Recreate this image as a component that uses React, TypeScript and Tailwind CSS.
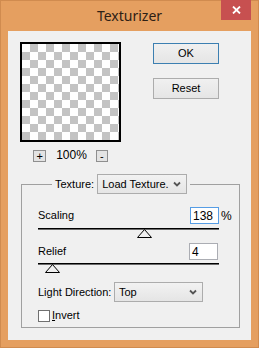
import React from 'react'

function Chevron() {
  return (
    <svg width="8" height="6" viewBox="0 0 8 6" className="shrink-0">
      <path d="M1 1.5 L4 4.5 L7 1.5" fill="none" stroke="#555" strokeWidth="1.8" />
    </svg>
  )
}

function Dropdown({ label, width }: { label: string; width: string }) {
  return (
    <div
      className={`${width} h-[20px] flex items-center justify-between pl-[4px] pr-[5px] border border-[#acacac] bg-gradient-to-b from-[#f2f2f2] to-[#e5e5e5]`}
    >
      <span>{label}</span>
      <Chevron />
    </div>
  )
}

function Slider({ pos }: { pos: number }) {
  // pos = thumb centre, px from the start of the track
  return (
    <div className="relative w-[181px] h-[10px]">
      <div className="h-[1px] bg-black" />
      <div className="h-[1px] bg-[#6a6a6a]" />
      <svg className="absolute top-[1px]" style={{ left: pos - 7.5 }} width="15" height="9" viewBox="0 0 15 9">
        <path d="M0.5 8.5 L7.5 0.5 L14.5 8.5 Z" fill="#f0f0f0" stroke="#000" strokeWidth="1" />
      </svg>
    </div>
  )
}

function NumberBox({ value, focused }: { value: string; focused?: boolean }) {
  return (
    <div
      className={`w-[29px] h-[17px] flex items-center pl-[2px] bg-white border text-[12px] ${
        focused ? 'border-[#569de5]' : 'border-[#abadb3]'
      }`}
    >
      {value}
    </div>
  )
}

function PushButton({ label, isDefault }: { label: string; isDefault?: boolean }) {
  return (
    <button
      className={`w-[66px] h-[21px] flex items-center justify-center border bg-gradient-to-b from-[#f0f0f0] to-[#e5e5e5] ${
        isDefault ? 'border-[#3c7fb1]' : 'border-[#acacac]'
      }`}
    >
      {label}
    </button>
  )
}

export default function App() {
  return (
    <div className="w-[259px] h-[348px] bg-[#e59f60] border border-[#d08b4f] flex flex-col font-['Liberation_Sans',Arial,sans-serif] text-[11px] text-black">
      {/* title bar */}
      <div className="relative h-[30px] flex items-center justify-center">
        <span className="font-['Noto_Sans',sans-serif] text-[14px] text-[#2d2015] -mt-[1px]">Texturizer</span>
        <div className="absolute top-[-1px] right-[7px] w-[30px] h-[20px] bg-[#c75050] flex items-center justify-center">
          <svg width="9" height="8" viewBox="0 0 9 8">
            <path d="M1 0.5 L8 7.5 M8 0.5 L1 7.5" stroke="#fff" strokeWidth="1.8" />
          </svg>
        </div>
      </div>

      {/* client area */}
      <div className="ml-[7px] w-[243px] h-[309px] bg-[#f0f0f0] pl-[12px] pt-[11px]">
        <div className="flex">
          <div className="flex flex-col items-center w-[101px]">
            <div className="w-[101px] h-[100px] border-2 border-black bg-[conic-gradient(#c3c3c3_25%,#ffffff_0_50%,#c3c3c3_0_75%,#ffffff_0)] bg-[length:16px_16px]" />
            <div className="mt-[8px] h-[12px] flex items-center">
              <div className="w-[13px] h-[12px] border border-[#8f8f8f] bg-[#e3e3e3] flex items-center justify-center text-[11px] leading-none">
                +
              </div>
              <span className="ml-[10px] mr-[9px] -mt-[2px] text-[12px] leading-none">100%</span>
              <div className="w-[12px] h-[12px] border border-[#8f8f8f] bg-[#e3e3e3] flex items-center justify-center text-[11px] leading-none">
                -
              </div>
            </div>
          </div>
          <div className="ml-[32px] mt-[1px] flex flex-col gap-[14px]">
            <PushButton label="OK" isDefault />
            <PushButton label="Reset" />
          </div>
        </div>

        <fieldset className="mt-[12px] ml-[1px] w-[219px] border border-[#a0a0a0] pl-[16px] pb-[5px]">
          <legend className="ml-[14px] px-[3px] flex items-center">
            <span>Texture:</span>
            <div className="ml-[3px]">
              <Dropdown label="Load Texture." width="w-[90px]" />
            </div>
          </legend>

          <div className="mt-[13px] flex items-center h-[17px]">
            <span className="w-[152px]">Scaling</span>
            <NumberBox value="138" focused />
            <span className="ml-[2px] text-[12px]">%</span>
          </div>
          <div className="mt-[4px]">
            <Slider pos={106} />
          </div>

          <div className="mt-[5px] flex items-center h-[17px]">
            <span className="w-[151px]">Relief</span>
            <NumberBox value="4" />
          </div>
          <div className="mt-[3px]">
            <Slider pos={14} />
          </div>

          <div className="mt-[9px] flex items-center">
            <span className="w-[76px]">Light Direction:</span>
            <Dropdown label="Top" width="w-[89px]" />
          </div>

          <div className="mt-[7px] flex items-center h-[13px]">
            <div className="w-[12px] h-[12px] border border-[#707070] bg-white" />
            <span className="ml-[2px]">
              <span className="underline">I</span>nvert
            </span>
          </div>
        </fieldset>
      </div>
    </div>
  )
}
